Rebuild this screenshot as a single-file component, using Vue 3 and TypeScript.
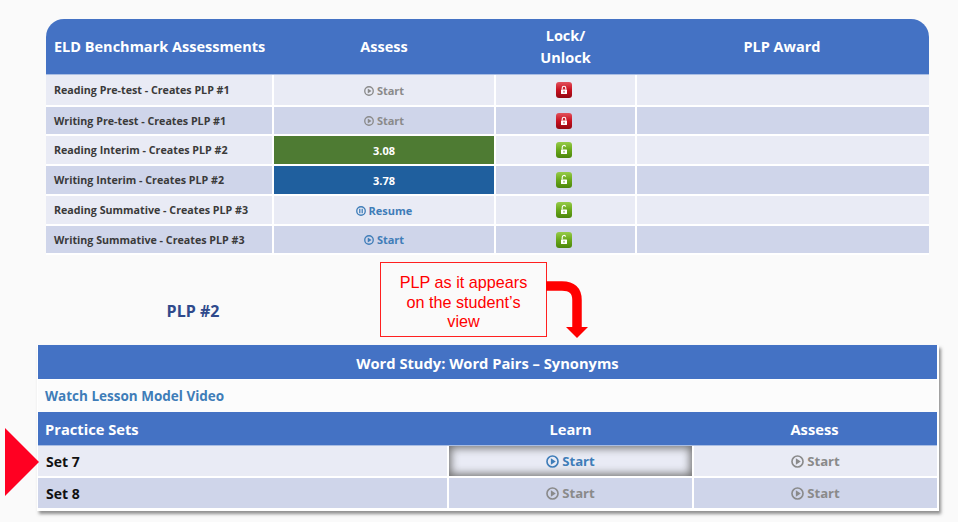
<template>
  <div class="page">
    <table class="bench">
      <colgroup>
        <col class="c1" /><col class="c2" /><col class="c3" /><col class="c4" />
      </colgroup>
      <thead>
        <tr>
          <th class="first">ELD Benchmark Assessments</th>
          <th>Assess</th>
          <th>Lock/<br />Unlock</th>
          <th>PLP Award</th>
        </tr>
      </thead>
      <tbody>
        <tr
          v-for="(row, idx) of benchRows"
          :key="row.name"
          :class="[idx % 2 ? 'even' : 'odd', `h${row.height}`]"
        >
          <td class="name">{{ row.name }}</td>
          <td v-if="row.score" class="score" :class="row.score.kind">{{ row.score.value }}</td>
          <td v-else class="action" :class="row.active ? 'on' : 'off'">
            <svg class="ico" viewBox="0 0 12 12">
              <circle cx="6" cy="6" r="5.100" fill="none" stroke="currentColor" stroke-width="1.600" />
              <path v-if="row.label === 'Start'" d="M4.500 3.100 9 6 4.500 8.900Z" fill="currentColor" />
              <path v-else d="M3.800 3.400h1.500v5.200H3.800ZM6.700 3.400h1.500v5.200H6.700Z" fill="currentColor" />
            </svg>{{ row.label }}
          </td>
          <td class="lock-cell">
            <svg class="lock" viewBox="0 0 16 16">
              <rect width="16" height="16" rx="3" :fill="row.locked ? 'url(#lockRed)' : 'url(#lockGreen)'" />
              <path
                v-if="row.locked"
                d="M6.200 7.600V6.100a1.800 1.800 0 0 1 3.600 0v1.500"
                fill="none"
                stroke="#fff"
                stroke-width="1.100"
              />
              <path
                v-else
                d="M6.200 7.600V5.200a1.800 1.800 0 0 1 3.500-.6"
                fill="none"
                stroke="#fff"
                stroke-width="1.100"
              />
              <rect x="5" y="7.400" width="6" height="4.600" rx="0.500" fill="#fff" />
              <rect x="7.500" y="8.800" width="1" height="1.800" :fill="row.locked ? '#b5101c' : '#5d9c12'" />
            </svg>
          </td>
          <td></td>
        </tr>
      </tbody>
    </table>

    <svg class="defs" width="0" height="0">
      <defs>
        <linearGradient id="lockRed" x1="0" y1="0" x2="0" y2="1">
          <stop offset="0" stop-color="#e2525c" />
          <stop offset="0.5" stop-color="#c8101f" />
          <stop offset="1" stop-color="#930812" />
        </linearGradient>
        <linearGradient id="lockGreen" x1="0" y1="0" x2="0" y2="1">
          <stop offset="0" stop-color="#97cc4a" />
          <stop offset="0.5" stop-color="#69a81a" />
          <stop offset="1" stop-color="#4c860c" />
        </linearGradient>
      </defs>
    </svg>

    <div class="middle">
      <div class="plp-title">PLP #2</div>
      <div class="callout">PLP as it appears on the student’s view</div>
      <svg class="arrow" viewBox="0 0 44 60" width="44" height="60">
        <path d="M0 6H16Q31 6 31 20V47" fill="none" stroke="#ff0000" stroke-width="9.500" />
        <path d="M20 47H42L31 58Z" fill="#ff0000" />
      </svg>
    </div>

    <div class="panel">
      <div class="panel-head">Word Study: Word Pairs – Synonyms</div>
      <div class="video-link">Watch Lesson Model Video</div>
      <table class="sets">
        <colgroup>
          <col class="s1" /><col class="s2" /><col class="s3" />
        </colgroup>
        <thead>
          <tr>
            <th class="first">Practice Sets</th>
            <th>Learn</th>
            <th>Assess</th>
          </tr>
        </thead>
        <tbody>
          <tr v-for="(row, idx) of setRows" :key="row.name" :class="idx % 2 ? 'even' : 'odd'">
            <td class="set-name">{{ row.name }}</td>
            <td class="action" :class="[row.learnOn ? 'on' : 'off', { glow: row.learnOn }]">
              <svg class="ico" viewBox="0 0 12 12">
                <circle cx="6" cy="6" r="5.100" fill="none" stroke="currentColor" stroke-width="1.500" />
                <path d="M4.500 3.100 9 6 4.500 8.900Z" fill="currentColor" />
              </svg>Start
            </td>
            <td class="action off">
              <svg class="ico" viewBox="0 0 12 12">
                <circle cx="6" cy="6" r="5.100" fill="none" stroke="currentColor" stroke-width="1.500" />
                <path d="M4.500 3.100 9 6 4.500 8.900Z" fill="currentColor" />
              </svg>Start
            </td>
          </tr>
        </tbody>
      </table>
      <div class="pointer"></div>
    </div>
  </div>
</template>

<script setup lang="ts">
interface BenchRow {
  name: string
  height: number
  label?: string
  active?: boolean
  locked: boolean
  score?: { value: string; kind: string }
}

const benchRows: BenchRow[] = [
  { name: 'Reading Pre-test - Creates PLP #1', height: 30, label: 'Start', locked: true },
  { name: 'Writing Pre-test - Creates PLP #1', height: 27, label: 'Start', locked: true },
  { name: 'Reading Interim - Creates PLP #2', height: 28, locked: false, score: { value: '3.08', kind: 'green' } },
  { name: 'Writing Interim - Creates PLP #2', height: 28, locked: false, score: { value: '3.78', kind: 'blue' } },
  { name: 'Reading Summative - Creates PLP #3', height: 28, label: 'Resume', active: true, locked: false },
  { name: 'Writing Summative - Creates PLP #3', height: 27, label: 'Start', active: true, locked: false },
]

const setRows = [
  { name: 'Set 7', learnOn: true },
  { name: 'Set 8', learnOn: false },
]
</script>

<style>
html,
body {
  margin: 0;
  background: #fafafa;
}
</style>

<style scoped>
.page {
  width: 958px;
  height: 522px;
  overflow: hidden;
  padding-top: 19px;
  box-sizing: border-box;
  font-family: "Open Sans", "Liberation Sans", sans-serif;
  position: relative;
}

table {
  border-collapse: separate;
  border-spacing: 0;
  table-layout: fixed;
}

.bench {
  width: 883px;
  margin-left: 46px;
}

.c1 { width: 228px; }
.c2 { width: 222px; }
.c3 { width: 141px; }
.c4 { width: 292px; }

.bench th {
  height: 55px;
  padding: 0 2px 0 0;
  background: #4472c4;
  color: #fff;
  font-size: 14.500px;
  line-height: 22px;
  font-weight: 700;
  text-align: center;
  border-bottom: 1px solid #a9bde3;
}

.bench th:first-child {
  border-top-left-radius: 18px;
}

.bench th:last-child {
  border-top-right-radius: 18px;
}

.bench th.first {
  text-align: left;
  padding-left: 8px;
}

.bench td {
  padding: 0;
  border-bottom: 2px solid #fff;
  border-right: 2px solid #fff;
  font-size: 11px;
  font-weight: 700;
  text-align: center;
}

.h27 td { height: 27px; }
.h28 td { height: 28px; }
.h30 td { height: 30px; }

.bench td:last-child {
  border-right: 0;
}

.odd td {
  background: #e9ebf5;
}

.even td {
  background: #cfd5ea;
}

.bench td.name {
  text-align: left;
  padding-left: 8px;
  color: #3a3a3a;
  font-size: 10.700px;
}

.bench td.score {
  color: #fff;
}

.bench td.green {
  background: #4e7b33;
}

.bench td.blue {
  background: #1f5f9e;
}

.action {
  white-space: nowrap;
}

.off {
  color: #8a8a8a;
}

.on {
  color: #3f7db8;
}

.ico {
  width: 10px;
  height: 10px;
  margin-right: 3px;
  vertical-align: -1px;
}

.lock-cell {
  line-height: 0;
}

.lock {
  width: 16px;
  height: 16px;
  margin-right: 3px;
}

.defs {
  position: absolute;
}

.middle {
  position: relative;
  height: 90px;
}

.plp-title {
  position: absolute;
  left: 0;
  top: 46px;
  width: 386px;
  text-align: center;
  color: #2f4a8c;
  font-size: 16px;
  font-weight: 700;
  line-height: 20px;
}

.callout {
  position: absolute;
  left: 380px;
  top: 7px;
  width: 167px;
  height: 75px;
  box-sizing: border-box;
  padding: 10px 12px 0;
  border: 1px solid #ff2020;
  color: #ff0000;
  font-family: "Liberation Sans", Arial, sans-serif;
  font-size: 16.200px;
  line-height: 19.500px;
  text-align: center;
}

.arrow {
  position: absolute;
  left: 546px;
  top: 25px;
}

.panel {
  position: relative;
  width: 902px;
  height: 166px;
  margin-left: 37px;
  background: #fff;
  box-shadow: 2px 3px 3px rgba(110, 110, 110, 0.75);
  padding: 0 2px 0 1px;
  box-sizing: border-box;
}

.panel-head {
  height: 34px;
  margin-bottom: 1px;
  background: #4472c4;
  color: #fff;
  font-size: 14.700px;
  font-weight: 700;
  line-height: 36px;
  text-align: center;
}

.video-link {
  height: 32px;
  padding-left: 7px;
  background: #fcfcfc;
  color: #3f7db8;
  font-size: 13.500px;
  font-weight: 700;
  line-height: 33px;
}

.sets {
  width: 899px;
}

.s1 { width: 411px; }
.s2 { width: 245px; }
.s3 { width: 243px; }

.sets th {
  height: 33px;
  padding: 0 2px 0 0;
  background: #4472c4;
  color: #fff;
  font-size: 14.700px;
  font-weight: 700;
  text-align: center;
  border-bottom: 1px solid #a9bde3;
}

.sets th.first {
  text-align: left;
  padding-left: 7px;
}

.sets td {
  height: 30px;
  padding: 0;
  border-bottom: 2px solid #fff;
  border-right: 2px solid #fff;
  font-size: 13.200px;
  font-weight: 700;
  text-align: center;
}

.sets td:last-child {
  border-right: 0;
}

.sets td.set-name {
  text-align: left;
  padding-left: 8px;
  color: #111;
  font-size: 14px;
}

.sets .ico {
  width: 13px;
  height: 13px;
  vertical-align: -2px;
}

.sets td.glow {
  box-shadow: inset 0 0 9px 2px #707070;
}

.pointer {
  position: absolute;
  left: -32px;
  top: 83px;
  width: 0;
  height: 0;
  border-top: 34px solid transparent;
  border-bottom: 34px solid transparent;
  border-left: 34px solid #ff0022;
}
</style>
